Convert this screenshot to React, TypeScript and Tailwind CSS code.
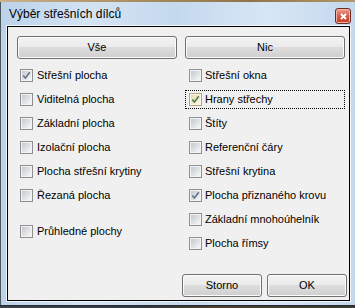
import { Fragment } from 'react';

type Item = { label: string; checked?: boolean; focused?: boolean; gapBefore?: boolean };

const leftItems: Item[] = [
  { label: 'Střešní plocha', checked: true },
  { label: 'Viditelná plocha' },
  { label: 'Základní plocha' },
  { label: 'Izolační plocha' },
  { label: 'Plocha střešní krytiny' },
  { label: 'Řezaná plocha' },
  { label: 'Průhledné plochy', gapBefore: true },
];

const rightItems: Item[] = [
  { label: 'Střešní okna' },
  { label: 'Hrany střechy', checked: true, focused: true },
  { label: 'Štíty' },
  { label: 'Referenční čáry' },
  { label: 'Střešní krytina' },
  { label: 'Plocha přiznaného krovu', checked: true },
  { label: 'Základní mnohoúhelník' },
  { label: 'Plocha římsy' },
];

function CheckBox({ checked, hot }: { checked?: boolean; hot?: boolean }) {
  return (
    <span
      className={
        hot
          ? 'w-[13px] h-[13px] shrink-0 border border-[#b9a57c] bg-[#fbf6ea] p-[1px] flex'
          : 'w-[13px] h-[13px] shrink-0 border border-[#8e8f8f] bg-[#f4f4f4] p-[1px] flex'
      }
    >
      <span
        className={
          hot
            ? 'flex-1 flex items-center justify-center bg-[linear-gradient(135deg,#ead9b6,#fbf4e4)]'
            : 'flex-1 flex items-center justify-center bg-[linear-gradient(135deg,#c4c8cf,#f7f7f7)]'
        }
      >
        {checked && (
          <svg width="9" height="9" viewBox="0 0 9 9">
            <path
              d="M1.2 4.6 L3.4 7 L7.8 1.2"
              stroke={hot ? '#4f7f4a' : '#66758c'}
              strokeWidth="1.6"
              fill="none"
            />
          </svg>
        )}
      </span>
    </span>
  );
}

function WinButton({ label, className }: { label: string; className: string }) {
  return (
    <div
      className={`${className} h-[23px] rounded-[3px] border border-[#707070] bg-[linear-gradient(to_bottom,#f2f2f2_0%,#ebebeb_45%,#dddddd_50%,#cfcfcf_100%)] shadow-[inset_0_0_0_1px_#fbfbfb] flex items-center justify-center text-[11px] text-black`}
    >
      {label}
    </div>
  );
}

function Row({ item, right }: { item: Item; right?: boolean }) {
  return (
    <div className={item.gapBefore ? 'h-[24px] mt-[12px] flex items-center' : 'h-[24px] flex items-center'}>
      <div
        className={
          item.focused
            ? 'w-full h-[19px] border border-dotted border-black flex items-center pl-[3px] gap-[3px]'
            : right
            ? 'w-full h-[19px] border border-transparent flex items-center pl-[3px] gap-[3px]'
            : 'w-full h-[19px] border border-transparent flex items-center pl-[2px] gap-[4px]'
        }
      >
        <CheckBox checked={item.checked} hot={item.focused} />
        <span className="text-[11px] text-black whitespace-nowrap leading-none">{item.label}</span>
      </div>
    </div>
  );
}

export default function App() {
  return (
    <div className="w-[355px] h-[308px] flex flex-col bg-[#3a3f46] font-['Liberation_Sans',Arial,sans-serif] select-none">
      {/* desktop behind the window */}
      <div className="h-[2px] bg-[linear-gradient(to_right,#c9b28a,#a88c5e_40%,#8f7448_70%,#b29868)]" />

      {/* window frame */}
      <div className="flex flex-col border-l border-[#4b5660] bg-[linear-gradient(to_right,#bcd2ea,#d3e3f3_25%,#c5d9ee_50%,#d7e6f5_75%,#c4d8ed)]">
        {/* Title bar */}
        <div className="h-[23px] flex items-start justify-between pl-[8px] pr-[4px]">
          <span className="mt-[4px] text-[12px] text-black leading-[16px]">Výběr střešních dílců</span>
          <div className="mt-[6px] w-[16px] h-[16px] rounded-[3px] border border-[#6e2b22] bg-[linear-gradient(to_bottom,#eda294,#d55a47_50%,#c13b27)] shadow-[inset_0_0_0_1px_#f2b3a7] flex items-center justify-center">
            <svg width="7" height="7" viewBox="0 0 7 7">
              <path d="M1 1 L6 6 M6 1 L1 6" stroke="white" strokeWidth="2" />
            </svg>
          </div>
        </div>

        {/* Client area */}
        <div className="ml-[5px] mr-[4px] border border-[#f1f6fb]">
          <div className="h-[275px] border border-black bg-[#f0f0f0] flex flex-col">
            <div className="grid grid-cols-[160px_160px] gap-x-[8px] pl-[9px] pt-[9px]">
              <div className="flex flex-col">
                <WinButton label="Vše" className="w-full" />
                <div className="mt-[4px] flex flex-col">
                  {leftItems.map((item) => (
                    <Fragment key={item.label}>
                      <Row item={item} />
                    </Fragment>
                  ))}
                </div>
              </div>
              <div className="flex flex-col">
                <WinButton label="Nic" className="w-full" />
                <div className="mt-[4px] flex flex-col">
                  {rightItems.map((item) => (
                    <Row key={item.label} item={item} right />
                  ))}
                </div>
              </div>
            </div>

            <div className="mt-auto flex justify-end gap-[5px] pr-[2px] pb-[3px]">
              <WinButton label="Storno" className="w-[80px]" />
              <WinButton label="OK" className="w-[80px]" />
            </div>
          </div>
        </div>
        <div className="h-[3px]" />
      </div>

      {/* below the window */}
      <div className="flex-1 border-t border-[#25292e] bg-[linear-gradient(to_right,#3c434c,#333940_40%,#4a3f33_60%,#3b3a36)]" />
    </div>
  );
}
